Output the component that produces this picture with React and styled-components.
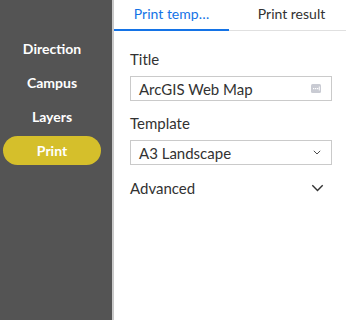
import React from "react";
import styled, { createGlobalStyle } from "styled-components";

const GlobalStyle = createGlobalStyle`
  html, body {
    margin: 0;
    padding: 0;
    background: #ffffff;
  }
  body {
    font-family: "Lato", "Liberation Sans", sans-serif;
  }
`;

const Layout = styled.div`
  display: flex;
  width: 346px;
  height: 320px;
  overflow: hidden;
`;

const Sidebar = styled.nav`
  width: 114px;
  flex-shrink: 0;
  background: #545454;
  border-right: 2px solid #c9c9c9;
  padding: 34px 11px 0 3px;
  box-sizing: border-box;
  display: flex;
  flex-direction: column;
  gap: 5px;
`;

const NavItem = styled.div`
  height: 29px;
  border-radius: 15px;
  display: flex;
  align-items: center;
  justify-content: center;
  color: #ffffff;
  font-weight: 700;
  font-size: 14px;
  background: ${(p) => (p.$active ? "#d5bf2b" : "transparent")};
`;

const Panel = styled.section`
  flex: 1;
  display: flex;
  flex-direction: column;
  background: #ffffff;
`;

const Tabs = styled.div`
  display: flex;
  height: 31px;
  border-bottom: 1px solid #e0e0e0;
  box-sizing: border-box;
`;

const Tab = styled.div`
  flex: ${(p) => (p.$active ? "0 0 115px" : "1")};
  display: flex;
  align-items: center;
  justify-content: center;
  padding: 0 0 4px ${(p) => (p.$active ? "0" : "8px")};
  font-size: 14px;
  color: ${(p) => (p.$active ? "#1473e6" : "#323232")};
  box-shadow: ${(p) => (p.$active ? "inset 0 -2px 0 #1473e6" : "none")};
  box-sizing: border-box;
  margin-bottom: -1px;
`;

const Form = styled.div`
  padding: 19px 14px 0 16px;
  display: flex;
  flex-direction: column;
`;

const Label = styled.div`
  font-size: 15px;
  color: #323232;
  line-height: 18px;
  margin-bottom: 8px;
`;

const Field = styled.div`
  height: 25px;
  border: 1px solid #cacaca;
  box-sizing: border-box;
  display: flex;
  align-items: center;
  justify-content: space-between;
  padding: 0 10px 0 8px;
  font-size: 15px;
  color: #323232;
  margin-bottom: 13px;
`;

const Row = styled.div`
  display: flex;
  align-items: center;
  justify-content: space-between;
  font-size: 15px;
  color: #323232;
  padding-right: 8px;
  margin-top: 1px;
`;

const DotsIcon = () => (
  <svg width="10" height="9" viewBox="0 0 10 9">
    <rect x="0" y="0" width="10" height="9" rx="1.5" fill="#c9cbd3" />
    <rect x="2" y="4" width="1.3" height="1.2" fill="#fff" />
    <rect x="4" y="4" width="1.3" height="1.2" fill="#fff" />
    <rect x="6" y="4" width="1.3" height="1.2" fill="#fff" />
    <rect x="7.8" y="2.5" width="1" height="4" fill="#fff" />
  </svg>
);

const Chevron = ({ size }) => (
  <svg width={size} height={size * 0.6} viewBox="0 0 10 6">
    <path d="M1 1 L5 5 L9 1" fill="none" stroke="#323232" strokeWidth="1.1" />
  </svg>
);

export default function App() {
  return (
    <>
      <GlobalStyle />
      <Layout>
        <Sidebar>
          <NavItem>Direction</NavItem>
          <NavItem>Campus</NavItem>
          <NavItem>Layers</NavItem>
          <NavItem $active>Print</NavItem>
        </Sidebar>
        <Panel>
          <Tabs>
            <Tab $active>Print temp…</Tab>
            <Tab>Print result</Tab>
          </Tabs>
          <Form>
            <Label>Title</Label>
            <Field>
              ArcGIS Web Map
              <DotsIcon />
            </Field>
            <Label>Template</Label>
            <Field>
              A3 Landscape
              <Chevron size={8} />
            </Field>
            <Row>
              Advanced
              <Chevron size={13} />
            </Row>
          </Form>
        </Panel>
      </Layout>
    </>
  );
}
